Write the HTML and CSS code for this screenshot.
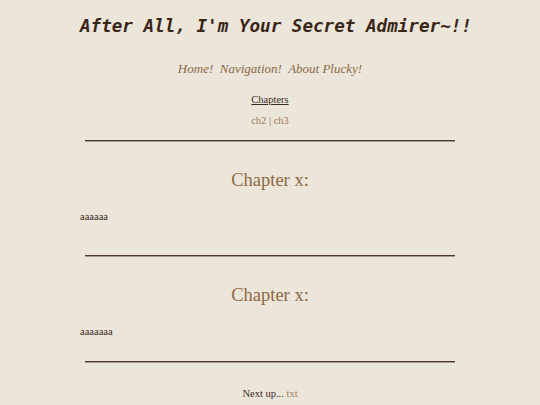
FILE: index.html
```html
<!DOCTYPE html>
<html lang="en">
<head>
    <meta charset="UTF-8">
    <meta name="viewport" content="width=device-width, initial-scale=1.0">
    <title>After All, I'm Your Secret Admirer~!!</title>
    <link rel="stylesheet" href="styles.css">
</head>
<body>
    <div class="page">
        <h1 class="title">After All, I'm Your Secret Admirer~!!</h1>
        <div class="nav">
            <a href="#">Home!</a>&nbsp; <a href="#">Navigation!</a>&nbsp; <a href="#">About Plucky!</a>
        </div>
        <div class="chapters"><a href="#">Chapters</a></div>
        <div class="chlist"><a href="#">ch2</a> | <a href="#">ch3</a></div>
        <hr class="first">

        <div class="chapter">
            <h2>Chapter x:</h2>
            <p>aaaaaa</p>
        </div>
        <hr>

        <div class="chapter">
            <h2>Chapter x:</h2>
            <p>aaaaaaa</p>
        </div>
        <hr class="last">

        <p class="next">Next up... <a href="#">txt</a></p>
    </div>
</body>
</html>
```

FILE: styles.css
```css
body {
    margin: 0;
    background-color: #ebe5da;
    color: #3b2a1f;
    font-family: "Liberation Serif", "Times New Roman", serif;
    font-size: 10.5px;
}
a {
    color: #9c7a55;
    text-decoration: none;
}
.page {
    width: 380px;
    margin: 0 auto;
}
.title {
    margin: 15px 0 0;
    font-family: "DejaVu Sans Mono", monospace;
    font-size: 17.6px;
    font-style: italic;
    font-weight: bold;
    line-height: 22px;
    color: #3a2616;
    text-align: center;
    white-space: nowrap;
}
.nav {
    margin-top: 24px;
    font-size: 13px;
    font-style: italic;
    line-height: 16px;
    text-align: center;
}
.nav a {
    color: #8d6a44;
}
.chapters {
    margin-top: 16px;
    line-height: 14px;
    text-align: center;
}
.chapters a {
    color: #3b2a1f;
    text-decoration: underline;
}
.chlist {
    margin-top: 7px;
    line-height: 14px;
    text-align: center;
    color: #6e5a4a;
}
hr {
    width: 370px;
    margin: 31px auto 0;
    border: 0;
    border-top: 1px solid #4e3828;
    border-bottom: 1px solid #a8998a;
}
hr.first {
    margin-top: 12px;
}
hr.last {
    margin-top: 22px;
}
.chapter h2 {
    margin: 27px 0 0;
    font-size: 18.5px;
    font-weight: normal;
    line-height: 22px;
    color: #8f6a42;
    text-align: center;
}
.chapter p {
    margin: 19px 0 0;
    line-height: 14px;
}
.next {
    margin: 24px 0 0;
    line-height: 14px;
    text-align: center;
}
```
